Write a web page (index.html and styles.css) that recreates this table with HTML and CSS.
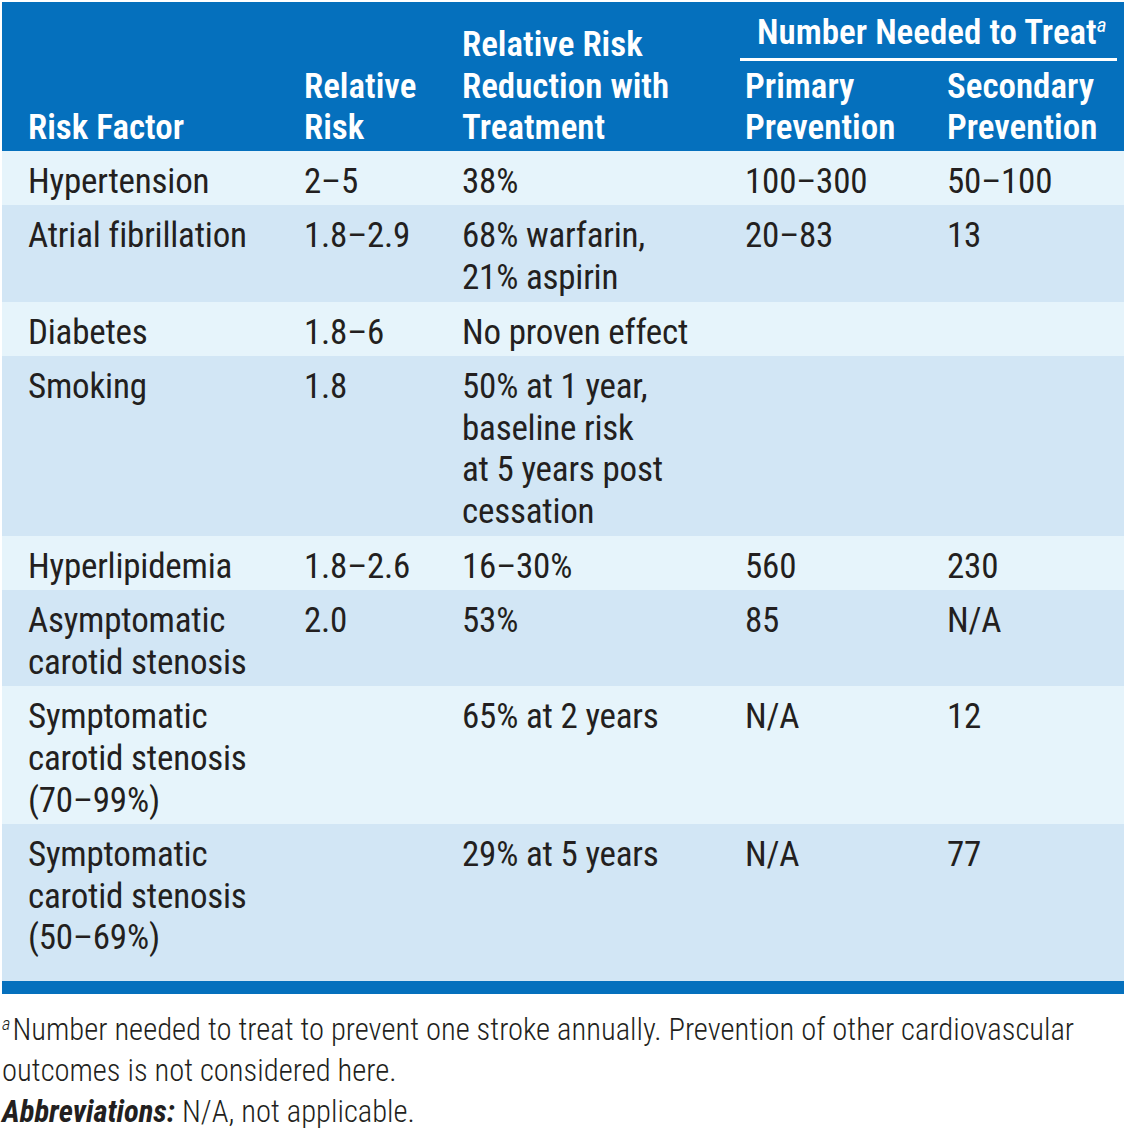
FILE: index.html
```html
<!DOCTYPE html>
<html lang="en">
<head>
<meta charset="utf-8">
<title>Stroke risk factors</title>
<link rel="stylesheet" href="styles.css">
</head>
<body>
<div class="wrap">
<table class="risk">
  <colgroup>
    <col class="c1"><col class="c2"><col class="c3"><col class="c4"><col class="c5">
  </colgroup>
  <thead>
    <tr>
      <th rowspan="2">Risk Factor</th>
      <th rowspan="2">Relative<br>Risk</th>
      <th rowspan="2">Relative Risk<br>Reduction with<br>Treatment</th>
      <th colspan="2" class="nnt"><div class="nnt-in">Number Needed to Treat<sup>a</sup></div></th>
    </tr>
    <tr class="sub">
      <th>Primary<br>Prevention</th>
      <th>Secondary<br>Prevention</th>
    </tr>
  </thead>
  <tbody>
    <tr class="lt"><td>Hypertension</td><td>2–5</td><td>38%</td><td>100–300</td><td>50–100</td></tr>
    <tr class="dk"><td>Atrial fibrillation</td><td>1.8–2.9</td><td>68% warfarin,<br>21% aspirin</td><td>20–83</td><td>13</td></tr>
    <tr class="lt"><td>Diabetes</td><td>1.8–6</td><td>No proven effect</td><td></td><td></td></tr>
    <tr class="dk"><td>Smoking</td><td>1.8</td><td>50% at 1 year,<br>baseline risk<br>at 5 years post<br>cessation</td><td></td><td></td></tr>
    <tr class="lt"><td>Hyperlipidemia</td><td>1.8–2.6</td><td>16–30%</td><td>560</td><td>230</td></tr>
    <tr class="dk"><td>Asymptomatic<br>carotid stenosis</td><td>2.0</td><td>53%</td><td>85</td><td>N/A</td></tr>
    <tr class="lt"><td>Symptomatic<br>carotid stenosis<br>(70–99%)</td><td></td><td>65% at 2 years</td><td>N/A</td><td>12</td></tr>
    <tr class="dk last"><td>Symptomatic<br>carotid stenosis<br>(50–69%)</td><td></td><td>29% at 5 years</td><td>N/A</td><td>77</td></tr>
  </tbody>
</table>
<div class="bar"></div>
<div class="notes">
  <p><sup>a</sup>Number needed to treat to prevent one stroke annually. Prevention of other cardiovascular outcomes is not considered here.</p>
  <p><b>Abbreviations:</b> N/A, not applicable.</p>
</div>
</div>
</body>
</html>
```
FILE: styles.css
```css
html, body {
  margin: 0;
  padding: 0;
  background: #ffffff;
}
body {
  font-family: "Roboto Condensed", "Liberation Sans", sans-serif;
  color: #231f20;
}
.wrap {
  padding: 2px 2px 0 2px;
  width: 1122px;
}
.risk {
  width: 1122px;
  border-collapse: collapse;
  table-layout: fixed;
  font-size: 35px;
  line-height: 41.6px;
}
.c1 { width: 276px; }
.c2 { width: 158px; }
.c3 { width: 283px; }
.c4 { width: 202px; }
.c5 { width: 203px; }

.risk th {
  background: #0570bd;
  color: #ffffff;
  font-weight: 600;
  text-align: left;
  vertical-align: bottom;
  padding: 0 4px 2px 26px;
  white-space: nowrap;
}
.risk th.nnt {
  padding: 10px 7px 0 26px;
}
.nnt-in {
  margin-left: -5px;
  padding: 0 0 4px 17px;
  border-bottom: 3px solid #ffffff;
}
.risk .sub th {
  padding-top: 5px;
}
.risk sup {
  font-size: 0.6em;
  font-style: italic;
  font-weight: 400;
  line-height: 0;
  vertical-align: 0.55em;
}
.risk td {
  vertical-align: top;
  padding: 10px 4px 3px 26px;
  white-space: nowrap;
  letter-spacing: -0.2px;
}
.lt td { background: #e6f4fb; }
.dk td { background: #d2e6f5; }
.last td { padding-bottom: 22px; }

.bar {
  height: 13px;
  background: #0570bd;
}
.notes {
  padding-top: 15px;
  font-size: 30.6px;
  line-height: 41px;
  font-weight: 300;
  color: #231f20;
}
.notes p {
  margin: 0;
}
.notes sup {
  display: inline-block;
  font-size: 0.6em;
  font-style: italic;
  line-height: 1;
  vertical-align: 0.55em;
  margin-right: 2px;
}
.notes b {
  font-weight: 700;
  font-style: italic;
}
```
